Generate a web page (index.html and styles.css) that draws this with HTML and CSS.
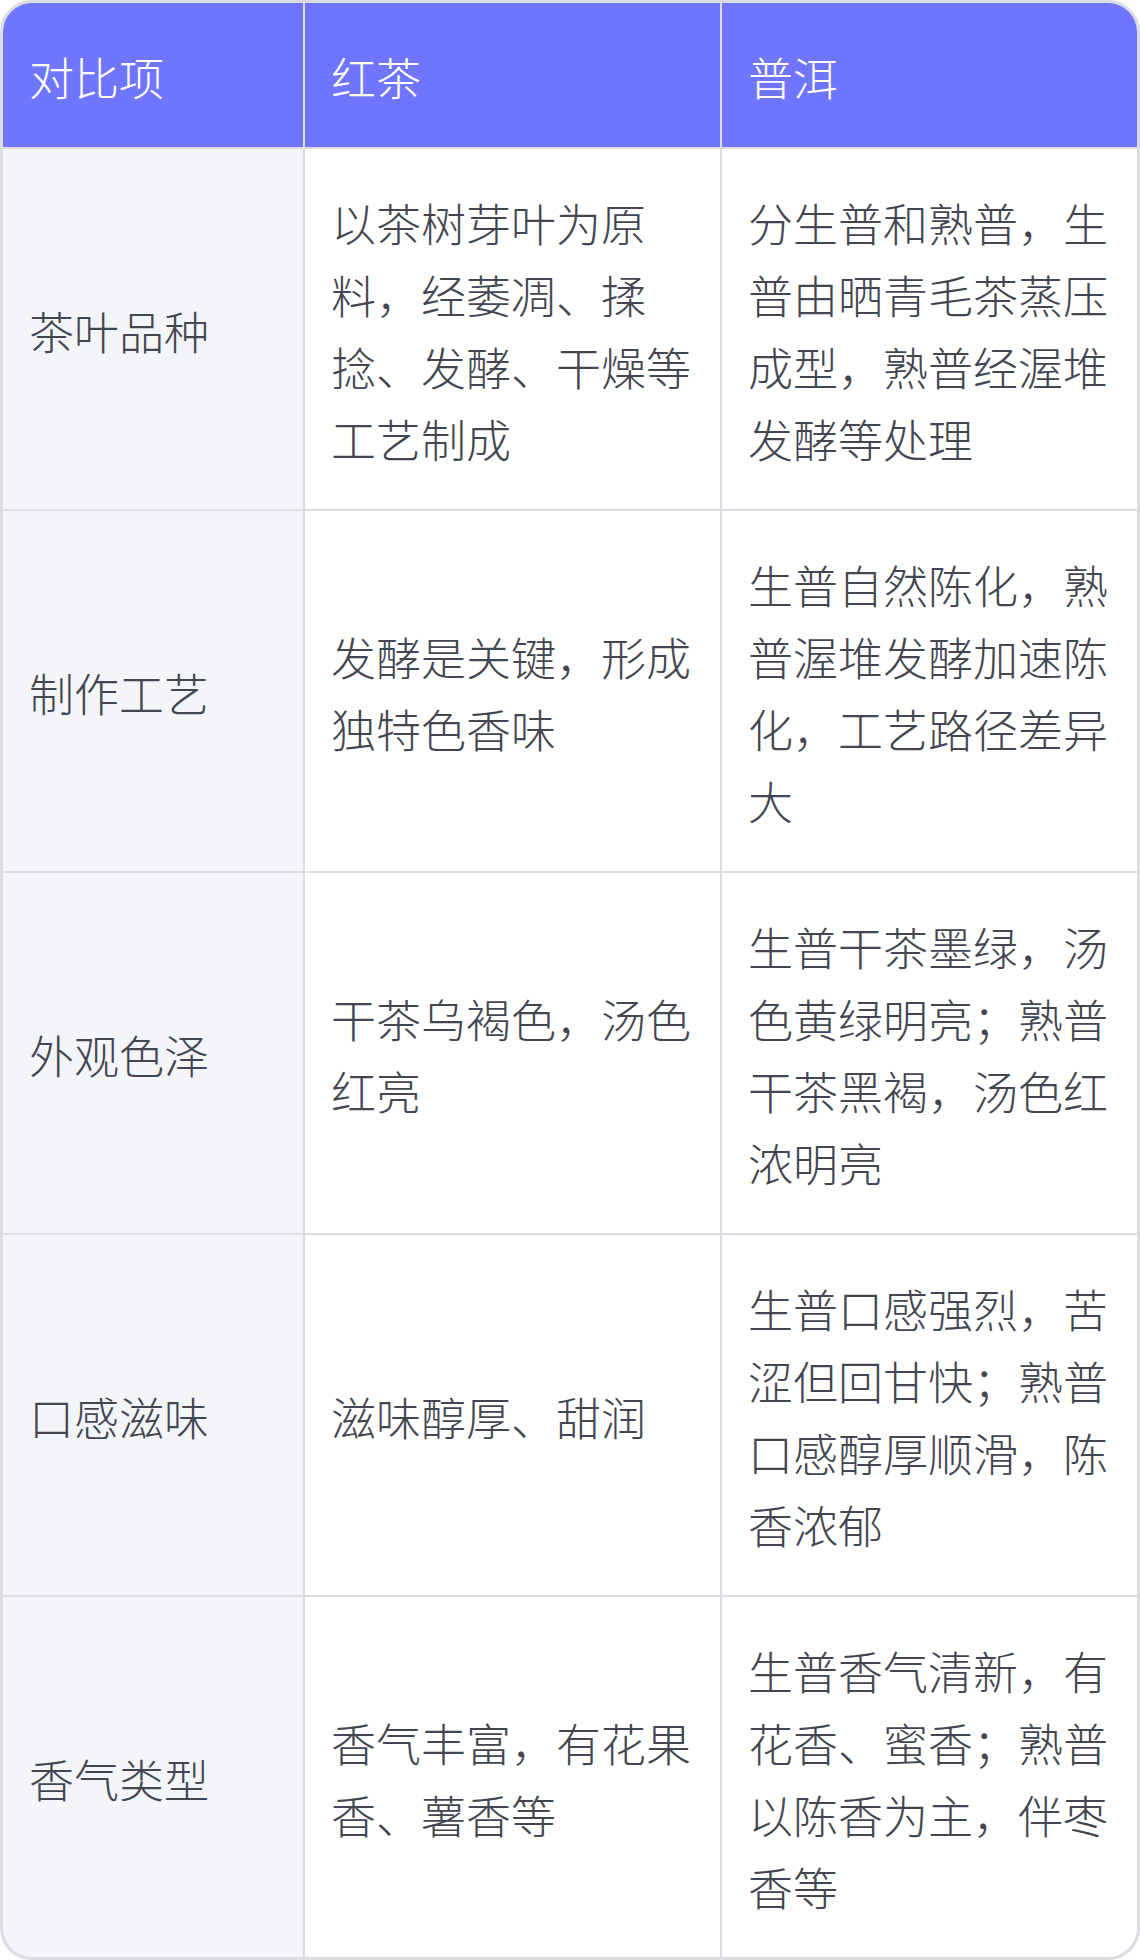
FILE: index.html
```html
<!DOCTYPE html>
<html lang="zh-CN">
<head>
<meta charset="utf-8">
<title>红茶与普洱对比</title>
<link rel="stylesheet" href="styles.css">
</head>
<body>
<div class="table">
  <div class="cell head">对比项</div>
  <div class="cell head">红茶</div>
  <div class="cell head">普洱</div>

  <div class="cell label">茶叶品种</div>
  <div class="cell">以茶树芽叶为原料，经萎凋、揉捻、发酵、干燥等工艺制成</div>
  <div class="cell">分生普和熟普，生普由晒青毛茶蒸压成型，熟普经渥堆发酵等处理</div>

  <div class="cell label">制作工艺</div>
  <div class="cell">发酵是关键，形成独特色香味</div>
  <div class="cell">生普自然陈化，熟普渥堆发酵加速陈化，工艺路径差异大</div>

  <div class="cell label">外观色泽</div>
  <div class="cell">干茶乌褐色，汤色红亮</div>
  <div class="cell">生普干茶墨绿，汤色黄绿明亮；熟普干茶黑褐，汤色红浓明亮</div>

  <div class="cell label">口感滋味</div>
  <div class="cell">滋味醇厚、甜润</div>
  <div class="cell">生普口感强烈，苦涩但回甘快；熟普口感醇厚顺滑，陈香浓郁</div>

  <div class="cell label">香气类型</div>
  <div class="cell">香气丰富，有花果香、薯香等</div>
  <div class="cell">生普香气清新，有花香、蜜香；熟普以陈香为主，伴枣香等</div>
</div>
</body>
</html>
```

FILE: styles.css
```css
html, body {
  margin: 0;
  padding: 0;
  background: #ffffff;
}

body {
  width: 1140px;
  font-family: "Noto Sans CJK SC", "Noto Sans", sans-serif;
  font-weight: 300;
}

.table {
  box-sizing: border-box;
  width: 1140px;
  border: 3px solid #dcdde3;
  border-radius: 32px;
  overflow: hidden;
  display: grid;
  grid-template-columns: 300px 415px 415px;
  gap: 2px;
  background: #dcdde3;
}

.cell {
  display: flex;
  align-items: center;
  padding: 38px 28px 34px 26px;
  font-size: 45px;
  line-height: 72px;
  color: #434651;
  background: #ffffff;
  min-height: 288px;
}

.head {
  background: #7075fe;
  color: #ffffff;
  min-height: 0;
}

.label {
  background: #f4f5f9;
}
```
